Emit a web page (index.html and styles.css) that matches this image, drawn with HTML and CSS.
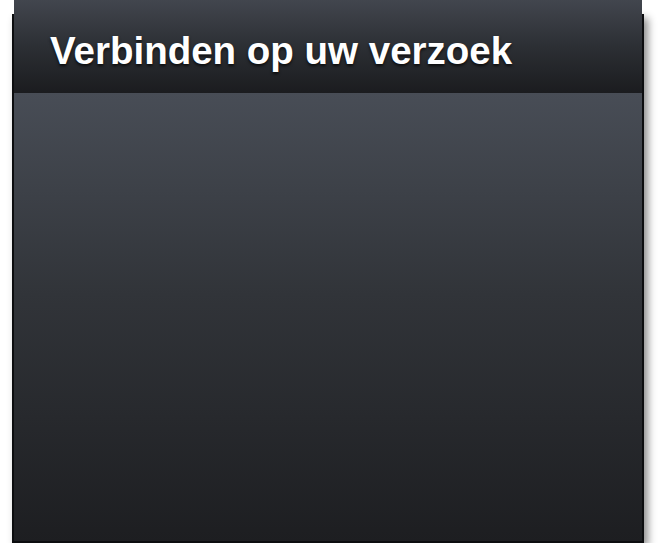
FILE: index.html
```html
<!DOCTYPE html>
<html lang="nl">
<head>
    <meta charset="UTF-8">
    <meta name="viewport" content="width=device-width, initial-scale=1.0">
    <title>Verbinden</title>
    <link rel="stylesheet" href="styles.css">
</head>
<body>
    <div class="panel">
        <div class="panel-header">
            <h1>Verbinden op uw verzoek</h1>
        </div>
        <div class="panel-body"></div>
    </div>
</body>
</html>
```

FILE: styles.css
```css
* { margin:0; padding:0; box-sizing: border-box; }
body {
    background: #fff;
    font-family: "Liberation Sans", Arial, sans-serif;
}
.panel {
    margin: 14px 0 0 12px;
    width: 632px;
    height: 529px;
    border: 2px solid #0c0d0f;
    border-top: 0;
    box-shadow: 4px 4px 8px rgba(0, 0, 0, 0.45);
    display: flex;
    flex-direction: column;
}
.panel-header {
    margin-top: -14px;
    height: 93px;
    background: linear-gradient(to bottom, #42464e 0%, #2c2f34 50%, #1b1c1f 100%);
    padding: 29px 0 0 36px;
}
.panel-header h1 {
    color: #fff;
    font-size: 38.5px;
    font-weight: bold;
    line-height: 44px;
    text-shadow: 0 2px 3px rgba(0, 0, 0, 0.7);
}
.panel-body {
    flex: 1;
    background: linear-gradient(to bottom, #484d56 0%, #313439 45%, #1d1e21 100%);
}
```
